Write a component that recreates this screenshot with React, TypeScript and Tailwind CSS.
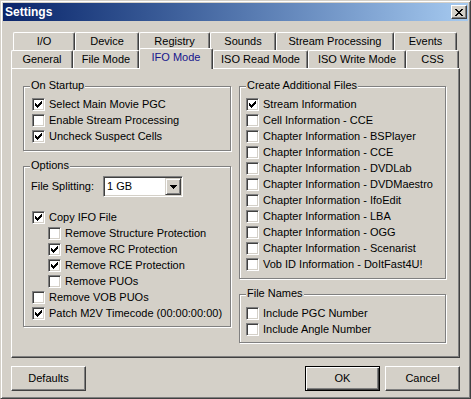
import type { ReactNode } from 'react'

const backTabs = [
  { label: 'I/O', w: 'w-[62px]' },
  { label: 'Device', w: 'w-[64px]' },
  { label: 'Registry', w: 'w-[71px]' },
  { label: 'Sounds', w: 'w-[66px]' },
  { label: 'Stream Processing', w: 'w-[118px]' },
  { label: 'Events', w: 'w-[63px]' },
]

const frontTabs = [
  { label: 'General', w: 'w-[62px]' },
  { label: 'File Mode', w: 'w-[66px]' },
  { label: 'IFO Mode', w: 'w-[74px]', active: true },
  { label: 'ISO Read Mode', w: 'w-[95px]' },
  { label: 'ISO Write Mode', w: 'w-[98px]' },
  { label: 'CSS', w: 'w-[53px]' },
]

const extraFiles = [
  { label: 'Stream Information', checked: true },
  { label: 'Cell Information - CCE' },
  { label: 'Chapter Information - BSPlayer' },
  { label: 'Chapter Information - CCE' },
  { label: 'Chapter Information - DVDLab' },
  { label: 'Chapter Information - DVDMaestro' },
  { label: 'Chapter Information - IfoEdit' },
  { label: 'Chapter Information - LBA' },
  { label: 'Chapter Information - OGG' },
  { label: 'Chapter Information - Scenarist' },
  { label: 'Vob ID Information - DoItFast4U!' },
]

// classic 7x7 check glyph, one 3px run per column
const checkCols = [2, 3, 4, 3, 2, 1, 0]

function CheckBox({ checked }: { checked?: boolean }) {
  return (
    <span className="w-[13px] h-[13px] shrink-0 flex items-center justify-center bg-white border border-t-[#808080] border-l-[#808080] border-r-white border-b-white shadow-[inset_1px_1px_#404040,inset_-1px_-1px_#d4d0c8]">
      {checked && (
        <svg width="7" height="7" viewBox="0 0 7 7" shapeRendering="crispEdges">
          {checkCols.map((y, x) => (
            <rect key={x} x={x} y={y} width="1" height="3" fill="#000" />
          ))}
        </svg>
      )}
    </span>
  )
}

function Check({ label, checked, indent }: { label: string; checked?: boolean; indent?: boolean }) {
  return (
    <div className={`flex items-center h-[16px] gap-[4px] ${indent ? 'pl-[16px]' : ''}`}>
      <CheckBox checked={checked} />
      <span className="leading-[13px] whitespace-nowrap">{label}</span>
    </div>
  )
}

function Group({ label, className, children }: { label: string; className: string; children: ReactNode }) {
  return (
    <div className={`relative border border-[#808080] shadow-[inset_1px_1px_white,1px_1px_white] ${className}`}>
      <span className="absolute left-[6px] -top-[8px] px-px bg-[#d4d0c8] leading-[13px] whitespace-nowrap">{label}</span>
      {children}
    </div>
  )
}

function Button({ label, isDefault }: { label: string; isDefault?: boolean }) {
  return (
    <div
      className={`w-[75px] h-[25px] flex items-center justify-center ${
        isDefault
          ? 'border border-black shadow-[inset_1px_1px_white,inset_-1px_-1px_#404040,inset_-2px_-2px_#808080]'
          : 'border border-t-white border-l-white border-r-[#404040] border-b-[#404040] shadow-[inset_-1px_-1px_#808080]'
      }`}
    >
      {label}
    </div>
  )
}

export default function App() {
  return (
    <div className="w-[471px] h-[399px] overflow-hidden bg-[#d4d0c8] text-[11px] text-black font-['Liberation_Sans',Arial,sans-serif] border border-t-[#d4d0c8] border-l-[#d4d0c8] border-r-[#404040] border-b-[#404040] p-[2px] shadow-[inset_1px_1px_white,inset_-1px_-1px_#808080] flex flex-col">
      {/* Title bar */}
      <div className="h-[18px] shrink-0 flex items-center justify-between pl-[2px] pr-[1px] bg-linear-to-r from-[#0a246a] to-[#a6caf0]">
        <span className="text-white font-bold text-[12px] leading-[14px]">Settings</span>
        <div className="w-[16px] h-[14px] flex items-center justify-center bg-[#d4d0c8] border border-t-white border-l-white border-r-[#404040] border-b-[#404040] shadow-[inset_-1px_-1px_#808080]">
          <svg width="8" height="7" viewBox="0 0 8 7" shapeRendering="crispEdges">
            <path d="M0 0h2v1h-2zM6 0h2v1h-2zM1 1h2v1h-2zM5 1h2v1h-2zM2 2h4v1h-4zM3 3h2v1h-2zM2 4h4v1h-4zM1 5h2v1h-2zM5 5h2v1h-2zM0 6h2v1h-2zM6 6h2v1h-2z" fill="#000" />
          </svg>
        </div>
      </div>

      <div className="px-[8px] pt-[11px] flex flex-col">
        {/* Tabs */}
        <div className="flex h-[18px] pl-[2px]">
          {backTabs.map((t) => (
            <div
              key={t.label}
              className={`${t.w} h-[18px] flex items-center justify-center border-l border-t border-r border-l-white border-t-white border-r-[#404040] shadow-[inset_-1px_0_#808080] rounded-t-[2px] whitespace-nowrap`}
            >
              {t.label}
            </div>
          ))}
        </div>
        <div className="flex items-end h-[18px]">
          {frontTabs.map((t) =>
            t.active ? (
              <div
                key={t.label}
                className={`${t.w} h-[21px] -mb-px relative z-10 bg-[#d4d0c8] flex items-center justify-center pb-[3px] border-l border-t border-r border-l-white border-t-white border-r-[#404040] shadow-[inset_-1px_0_#808080] rounded-t-[2px] text-[#14148c] whitespace-nowrap`}
              >
                {t.label}
              </div>
            ) : (
              <div
                key={t.label}
                className={`${t.w} h-[18px] bg-[#d4d0c8] flex items-center justify-center border-l border-t border-r border-l-white border-t-white border-r-[#404040] shadow-[inset_-1px_0_#808080] rounded-t-[2px] whitespace-nowrap`}
              >
                {t.label}
              </div>
            )
          )}
        </div>

        {/* Tab page */}
        <div className="h-[290px] flex gap-[8px] pl-[11px] pt-[17px] border border-t-white border-l-white border-r-[#404040] border-b-[#404040] shadow-[inset_-1px_-1px_#808080]">
          <div className="w-[208px] flex flex-col">
            <Group label="On Startup" className="pt-[9px] pb-[6px] pl-[8px]">
              <Check label="Select Main Movie PGC" checked />
              <Check label="Enable Stream Processing" />
              <Check label="Uncheck Suspect Cells" checked />
            </Group>
            <Group label="Options" className="mt-[15px] pt-[9px] pb-[5px] pl-[8px]">
              <div className="flex items-center -ml-px">
                <span className="w-[72px] leading-[13px]">File Splitting:</span>
                <div className="w-[80px] h-[21px] flex p-px bg-white border border-t-[#808080] border-l-[#808080] border-r-white border-b-white shadow-[inset_1px_1px_#404040,inset_-1px_-1px_#d4d0c8]">
                  <span className="flex-1 flex items-center pl-[2px] leading-[13px]">1 GB</span>
                  <span className="w-[16px] h-full flex items-center justify-center bg-[#d4d0c8] border border-t-[#d4d0c8] border-l-[#d4d0c8] border-r-[#404040] border-b-[#404040] shadow-[inset_1px_1px_white,inset_-1px_-1px_#808080]">
                    <svg width="7" height="4" viewBox="0 0 7 4" shapeRendering="crispEdges">
                      <path d="M0 0h7v1h-7zM1 1h5v1h-5zM2 2h3v1h-3zM3 3h1v1h-1z" fill="#000" />
                    </svg>
                  </span>
                </div>
              </div>
              <div className="mt-[12px] flex flex-col">
                <Check label="Copy IFO File" checked />
                <Check label="Remove Structure Protection" indent />
                <Check label="Remove RC Protection" checked indent />
                <Check label="Remove RCE Protection" checked indent />
                <Check label="Remove PUOs" indent />
                <Check label="Remove VOB PUOs" />
                <Check label="Patch M2V Timecode (00:00:00:00)" checked />
              </div>
            </Group>
          </div>

          <div className="w-[207px] flex flex-col">
            <Group label="Create Additional Files" className="pt-[9px] pb-[6px] pl-[6px]">
              {extraFiles.map((f) => (
                <Check key={f.label} label={f.label} checked={f.checked} />
              ))}
            </Group>
            <Group label="File Names" className="mt-[15px] pt-[10px] pb-[5px] pl-[6px]">
              <Check label="Include PGC Number" />
              <Check label="Include Angle Number" />
            </Group>
          </div>
        </div>

        {/* Buttons */}
        <div className="mt-[8px] flex items-center gap-[5px]">
          <Button label="Defaults" />
          <div className="ml-auto" />
          <Button label="OK" isDefault />
          <Button label="Cancel" />
        </div>
      </div>
    </div>
  )
}
